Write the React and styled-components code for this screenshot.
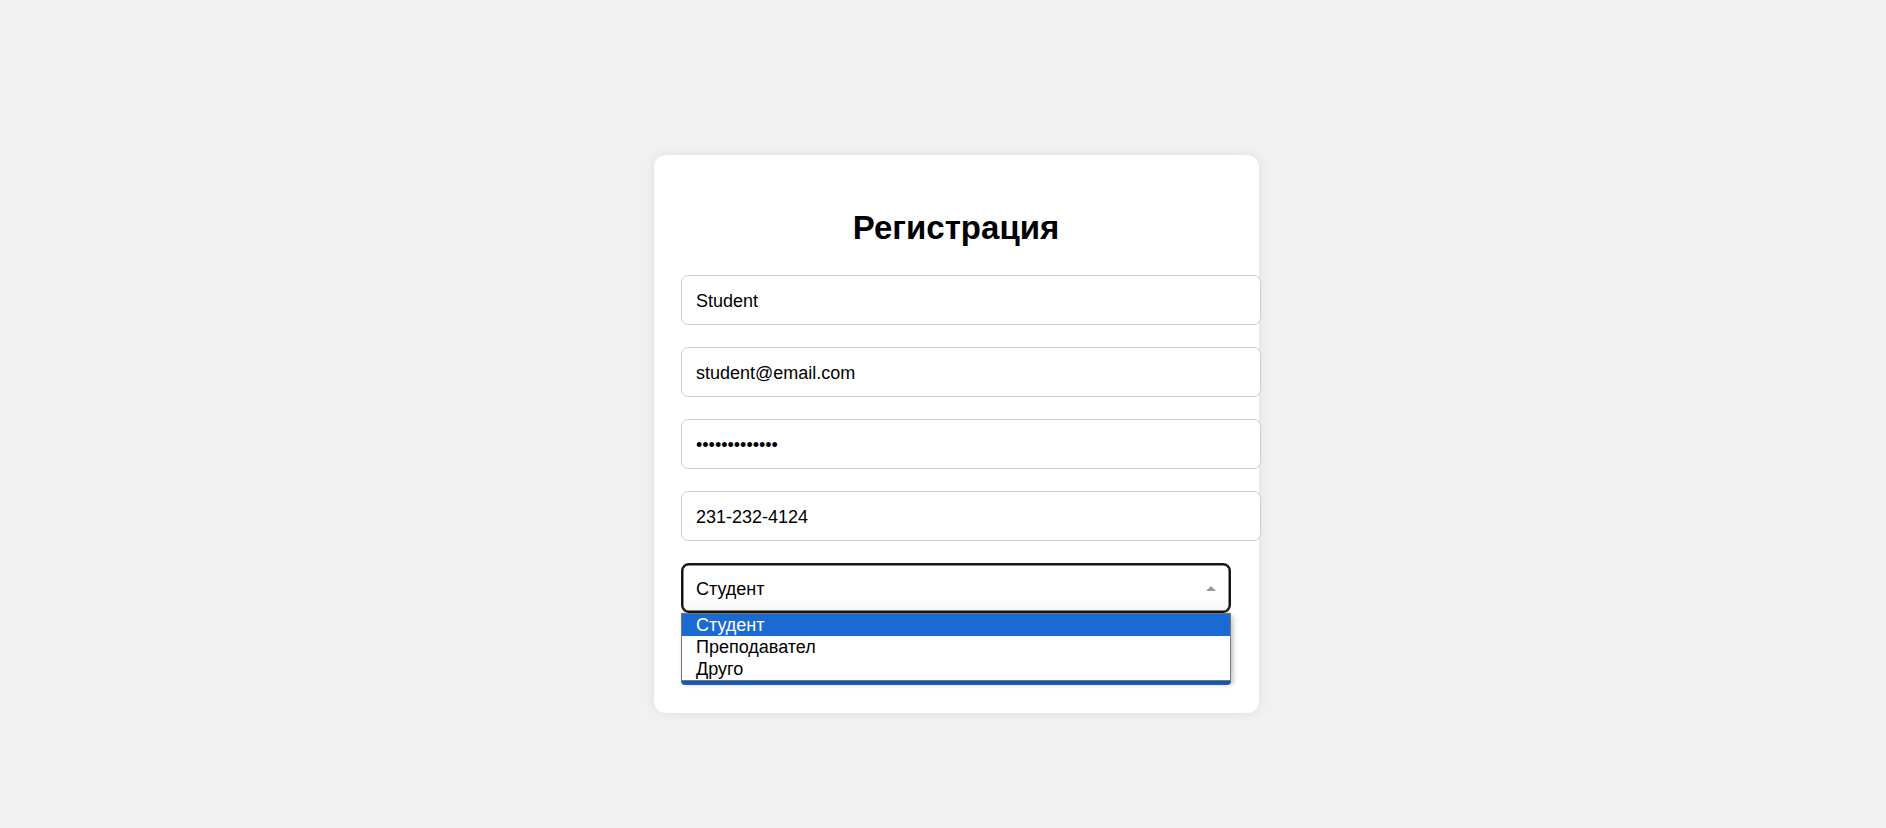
import React from 'react';
import styled, { createGlobalStyle } from 'styled-components';

const GlobalStyle = createGlobalStyle`
  html, body {
    margin: 0;
    padding: 0;
    background: #f1f1f1;
    font-family: 'Liberation Sans', Arial, sans-serif;
  }
`;

const Page = styled.div`
  min-height: 100vh;
  box-sizing: border-box;
  display: flex;
  justify-content: center;
  align-items: flex-start;
  padding: 155px 0 0 27px;
`;

const Card = styled.div`
  width: 605px;
  box-sizing: border-box;
  background: #ffffff;
  border-radius: 12px;
  padding: 28px 28px 28px 27px;
  box-shadow: 0 0 12px rgba(0, 0, 0, 0.08);
`;

const Title = styled.h1`
  margin: 26px 0 29px;
  font-size: 33px;
  line-height: 37px;
  font-weight: 700;
  text-align: center;
  color: #000;
`;

const Form = styled.form`
  display: flex;
  flex-direction: column;
  gap: 22px;
`;

const Input = styled.input`
  box-sizing: content-box;
  width: 100%;
  height: 20px;
  padding: 15px 14px 13px;
  margin: 0;
  border: 1px solid #cccccc;
  border-radius: 7px;
  background: #fff;
  font-family: 'Liberation Sans', Arial, sans-serif;
  font-size: 18px;
  color: #000;
  outline: none;
`;

const SelectWrap = styled.div`
  position: relative;
  width: 100%;
`;

const SelectBox = styled.div`
  box-sizing: border-box;
  width: 100%;
  height: 50px;
  display: flex;
  align-items: center;
  padding: 2px 14px 0 13px;
  border: 2px solid #141414;
  border-radius: 8px;
  box-shadow: inset 0 0 0 0.5px #141414;
  background: linear-gradient(#ffffff 70%, #f6f6f6);
  font-size: 18px;
  color: #000;
`;

const Arrow = styled.svg`
  position: absolute;
  right: 15px;
  top: 23px;
`;

const OptionList = styled.ul`
  position: absolute;
  z-index: 2;
  top: 100%;
  left: 0;
  width: 550px;
  box-sizing: border-box;
  margin: 0;
  padding: 0;
  list-style: none;
  background: #fff;
  border: 1px solid #767676;
  box-shadow: 2px 3px 5px rgba(0, 0, 0, 0.25);
`;

const Option = styled.li`
  height: 22px;
  line-height: 22px;
  padding-left: 14px;
  font-size: 18px;
  background: ${(p) => (p.$active ? '#1b69d3' : '#fff')};
  color: ${(p) => (p.$active ? '#fff' : '#000')};
`;

const SubmitButton = styled.button`
  box-sizing: border-box;
  width: 100%;
  height: 50px;
  border: none;
  border-radius: 4px;
  background: #1b69d3;
  color: #fff;
  font-family: 'Liberation Sans', Arial, sans-serif;
  font-size: 18px;
`;

const roles = ['Студент', 'Преподавател', 'Друго'];

const App = () => {
  return (
    <>
      <GlobalStyle />
      <Page>
        <Card>
          <Title>Регистрация</Title>
          <Form onSubmit={(e) => e.preventDefault()}>
            <Input type="text" defaultValue="Student" />
            <Input type="email" defaultValue="student@email.com" />
            <Input type="password" defaultValue="password12345" />
            <Input type="tel" defaultValue="231-232-4124" />

            <SelectWrap>
              <SelectBox>Студент</SelectBox>
              <Arrow width="10" height="5" viewBox="0 0 10 5">
                <path d="M0 5 L5 0 L10 5 Z" fill="#9a9a9a" />
              </Arrow>
              <OptionList>
                {roles.map((r, i) => (
                  <Option key={r} $active={i === 0}>
                    {r}
                  </Option>
                ))}
              </OptionList>
            </SelectWrap>

            <SubmitButton type="submit">Регистрирай се</SubmitButton>
          </Form>
        </Card>
      </Page>
    </>
  );
};

export default App;
